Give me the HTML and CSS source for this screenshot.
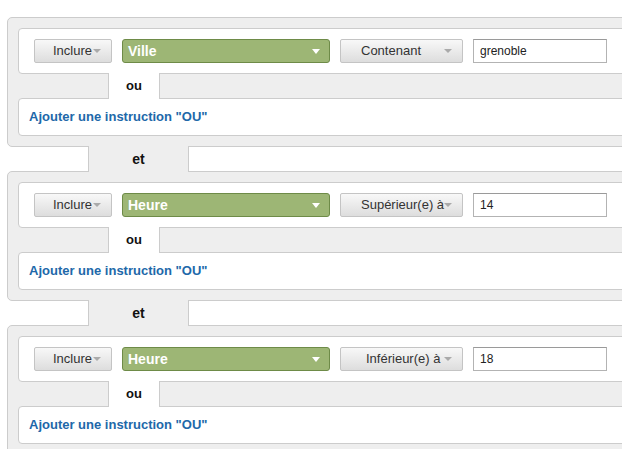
FILE: index.html
```html
<!DOCTYPE html>
<html lang="fr">
<head>
	<meta charset="UTF-8">
	<title>Segments</title>
	<link rel="stylesheet" href="styles.css">
</head>
<body>
	<div class="segments">
		<div class="group">
			<div class="cond-row">
				<span class="btn btn-include"><span class="btn-label">Inclure</span><span class="caret"></span></span>
				<span class="dim"><span class="dim-label">Ville</span><span class="caret-white"></span></span>
				<span class="btn btn-op"><span class="btn-label">Contenant</span><span class="caret"></span></span>
				<input type="text" class="val" value="grenoble">
			</div>
			<div class="or-join"><span class="or-tab">ou</span></div>
			<div class="cond-add"><a href="#" class="add-or">Ajouter une instruction "OU"</a></div>
		</div>

		<div class="and-join"><span class="and-tab">et</span></div>

		<div class="group">
			<div class="cond-row">
				<span class="btn btn-include"><span class="btn-label">Inclure</span><span class="caret"></span></span>
				<span class="dim"><span class="dim-label">Heure</span><span class="caret-white"></span></span>
				<span class="btn btn-op"><span class="btn-label">Supérieur(e) à</span><span class="caret"></span></span>
				<input type="text" class="val" value="14">
			</div>
			<div class="or-join"><span class="or-tab">ou</span></div>
			<div class="cond-add"><a href="#" class="add-or">Ajouter une instruction "OU"</a></div>
		</div>

		<div class="and-join"><span class="and-tab">et</span></div>

		<div class="group">
			<div class="cond-row">
				<span class="btn btn-include"><span class="btn-label">Inclure</span><span class="caret"></span></span>
				<span class="dim"><span class="dim-label">Heure</span><span class="caret-white"></span></span>
				<span class="btn btn-op"><span class="btn-label btn-label-wide">Inférieur(e) à</span><span class="caret"></span></span>
				<input type="text" class="val" value="18">
			</div>
			<div class="or-join"><span class="or-tab">ou</span></div>
			<div class="cond-add"><a href="#" class="add-or">Ajouter une instruction "OU"</a></div>
		</div>
	</div>
</body>
</html>
```

FILE: styles.css
```css
*{
	margin: 0;
	padding: 0;
	box-sizing: border-box;
	font-family: "Liberation Sans", Arial, sans-serif;
}
html, body{
	background-color: #fff;
	overflow: hidden;
}
.segments{
	width: 700px;
	padding: 17px 0 0 7px;
}
.group{
	background-color: #eee;
	border: 1px solid #ccc;
	border-radius: 5px;
	padding: 10px;
}
.cond-row{
	display: flex;
	align-items: center;
	gap: 10px;
	background-color: #fff;
	border: 1px solid #ccc;
	border-radius: 4px;
	padding: 10px 15px;
}
.btn{
	display: flex;
	align-items: center;
	height: 24px;
	border: 1px solid #c4c4c4;
	border-radius: 2px;
	background: linear-gradient(#f8f8f8, #dddddd);
	color: #333;
	font-size: 13px;
	padding-right: 10px;
	white-space: nowrap;
}
.btn-label{
	flex: 1;
	line-height: 22px;
}
.btn-include{
	width: 78px;
	padding-left: 18px;
}
.btn-op{
	width: 123px;
	padding-left: 20px;
}
.btn-label-wide{
	padding-left: 5px;
}
.caret{
	flex: none;
	width: 0;
	height: 0;
	border-left: 4px solid transparent;
	border-right: 4px solid transparent;
	border-top: 4px solid #aaa;
}
.dim{
	display: flex;
	align-items: center;
	width: 208px;
	height: 24px;
	background-color: #9db675;
	border: 1px solid #6e8b48;
	border-radius: 3px;
	padding: 0 9px 0 5px;
}
.dim-label{
	flex: 1;
	color: #fff;
	font-size: 14px;
	font-weight: bold;
	line-height: 22px;
}
.caret-white{
	width: 0;
	height: 0;
	border-left: 4px solid transparent;
	border-right: 4px solid transparent;
	border-top: 5px solid #fff;
}
.val{
	width: 134px;
	height: 24px;
	border: 1px solid #b3b3b3;
	border-top-color: #9a9a9a;
	padding: 0 6px;
	font-size: 12px;
	color: #222;
	outline: none;
}
.or-join{
	display: flex;
	height: 24px;
	padding-left: 90px;
}
.or-tab{
	position: relative;
	display: block;
	width: 52px;
	height: 26px;
	margin-top: -1px;
	background-color: #fff;
	border-left: 1px solid #ccc;
	border-right: 1px solid #ccc;
	text-align: center;
	line-height: 26px;
	font-size: 13px;
	font-weight: bold;
	color: #111;
}
.cond-add{
	background-color: #fff;
	border: 1px solid #ccc;
	border-radius: 4px;
	padding: 10px;
}
.add-or{
	display: block;
	line-height: 16px;
	color: #2168a9;
	font-size: 13px;
	font-weight: bold;
	text-decoration: none;
}
.and-join{
	display: flex;
	height: 24px;
	padding-left: 81px;
}
.and-tab{
	position: relative;
	display: block;
	width: 101px;
	height: 26px;
	margin-top: -1px;
	background-color: #eee;
	border-left: 1px solid #ccc;
	border-right: 1px solid #ccc;
	text-align: center;
	line-height: 26px;
	font-size: 14px;
	font-weight: bold;
	color: #111;
}
```
